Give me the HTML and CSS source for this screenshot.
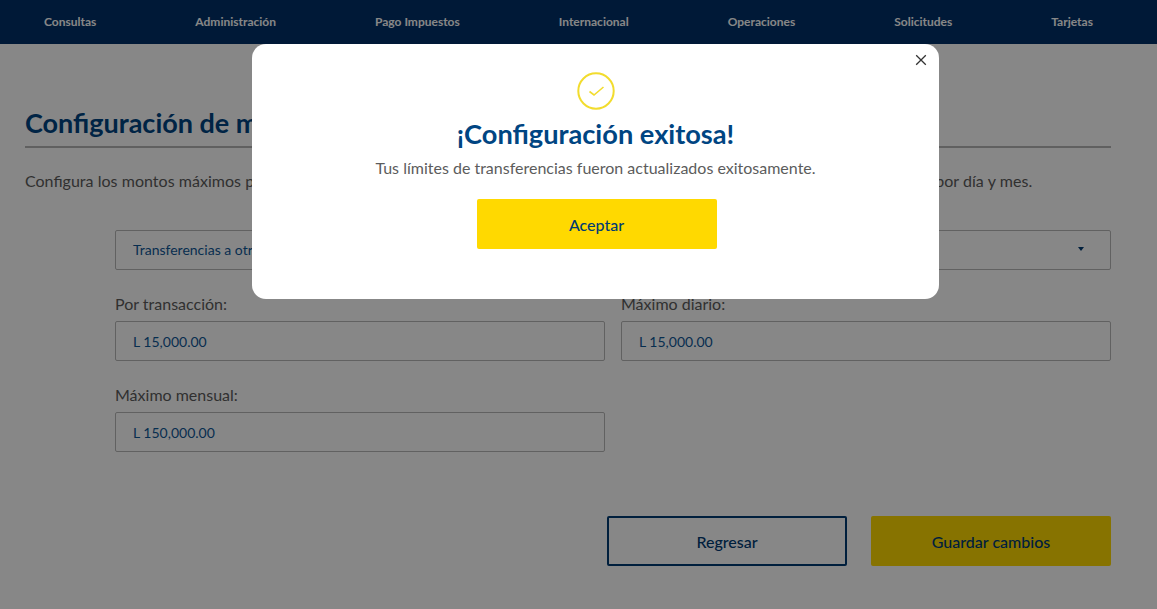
FILE: index.html
```html
<!DOCTYPE html>
<html lang="es">
<head>
    <meta charset="UTF-8">
    <meta name="viewport" content="width=device-width, initial-scale=1.0">
    <title>Configuración de montos</title>
    <link rel="stylesheet" href="styles.css">
</head>
<body>
    <nav class="topnav">
        <a href="#">Consultas</a>
        <a href="#">Administración</a>
        <a href="#">Pago Impuestos</a>
        <a href="#">Internacional</a>
        <a href="#">Operaciones</a>
        <a href="#">Solicitudes</a>
        <a href="#">Tarjetas</a>
    </nav>

    <main class="content">
        <h1 class="page-title">Configuración de montos máximos</h1>
        <p class="intro">Configura los montos máximos permitidos para todas tus transferencias según el tipo de transacción y el límite de cada operación por día y mes.</p>

        <div class="form">
            <div class="select-box">
                <span>Transferencias a otros bancos</span>
                <span class="caret"></span>
            </div>
            <div class="form-grid">
                <div class="field">
                    <label>Por transacción:</label>
                    <div class="input-box">L 15,000.00</div>
                </div>
                <div class="field">
                    <label>Máximo diario:</label>
                    <div class="input-box">L 15,000.00</div>
                </div>
                <div class="field">
                    <label>Máximo mensual:</label>
                    <div class="input-box">L 150,000.00</div>
                </div>
            </div>
        </div>

        <div class="actions">
            <button class="btn btn-outline">Regresar</button>
            <button class="btn btn-yellow">Guardar cambios</button>
        </div>
    </main>

    <div class="overlay">
        <div class="modal">
            <button class="close" aria-label="Cerrar">
                <svg width="12" height="12" viewBox="0 0 12 12"><path d="M1.2 1.2 10.8 10.8M10.8 1.2 1.2 10.8" stroke="#333" stroke-width="1.3" fill="none"/></svg>
            </button>
            <svg class="check" width="38" height="38" viewBox="0 0 38 38">
                <circle cx="19" cy="19" r="17.7" stroke="#f2dc2e" stroke-width="2" fill="none"/>
                <path d="M12.5 19.5 17 23 26.5 15" stroke="#f2dc2e" stroke-width="1.6" fill="none"/>
            </svg>
            <h2 class="modal-title">¡Configuración exitosa!</h2>
            <p class="modal-text">Tus límites de transferencias fueron actualizados exitosamente.</p>
            <button class="btn btn-yellow">Aceptar</button>
        </div>
    </div>
</body>
</html>
```

FILE: styles.css
```css
html, body {
    height: 100%;
}
body {
    margin: 0;
    font-family: 'Lato', sans-serif;
    background-color: #fff;
    overflow: hidden;
}
.topnav {
    height: 44px;
    box-sizing: border-box;
    background: #003069;
    display: flex;
    justify-content: space-between;
    align-items: center;
    padding: 0 64px 2px 44px;
}
.topnav a {
    color: #fff;
    font-size: 12px;
    font-weight: 700;
    text-decoration: none;
}
.content {
    padding: 0 46px 0 25px;
}
.page-title {
    margin: 0;
    padding: 61px 0 5px;
    font-size: 27px;
    line-height: 36px;
    font-weight: 700;
    color: #004582;
    border-bottom: 2px solid #b5b5b5;
}
.intro {
    margin: 22px 0 0;
    font-size: 16px;
    line-height: 22px;
    color: #5c5c5c;
    white-space: nowrap;
    word-spacing: 0.2px;
}
.form {
    margin: 38px 0 0 90px;
}
.select-box {
    height: 36px;
    border: 1px solid #b8b8b8;
    border-radius: 2px;
    display: flex;
    align-items: center;
    justify-content: space-between;
    padding: 0 26px 2px 17px;
    font-size: 14px;
    color: #0f5797;
}
.caret {
    width: 0;
    height: 0;
    border-left: 3px solid transparent;
    border-right: 3px solid transparent;
    border-top: 4px solid #003b74;
}
.form-grid {
    display: grid;
    grid-template-columns: 1fr 1fr;
    column-gap: 16px;
    row-gap: 23px;
    margin-top: 23px;
}
.field label {
    display: block;
    font-size: 16px;
    line-height: 22px;
    color: #5c5c5c;
    margin-bottom: 6px;
}
.input-box {
    height: 38px;
    line-height: 40px;
    border: 1px solid #b8b8b8;
    border-radius: 2px;
    padding: 0 17px;
    font-size: 14px;
    color: #0f5797;
}
.actions {
    display: flex;
    justify-content: flex-end;
    gap: 24px;
    margin-top: 64px;
}
.btn {
    width: 240px;
    height: 50px;
    font-family: inherit;
    font-size: 16px;
    font-weight: 500;
    color: #003b74;
    border-radius: 2px;
    border: none;
    padding: 0;
}
.btn-outline {
    background: transparent;
    border: 2px solid #003b74;
}
.btn-yellow {
    background: #ffd900;
}
.overlay {
    position: fixed;
    inset: 0;
    background: rgba(0, 0, 0, 0.47);
    display: flex;
    justify-content: center;
    align-items: flex-start;
    padding: 44px 0 0 34px;
}
.modal {
    position: relative;
    width: 687px;
    height: 255px;
    box-sizing: border-box;
    background: #fff;
    border-radius: 14px;
    padding: 28px 0 0 2px;
    display: flex;
    flex-direction: column;
    align-items: center;
}
.close {
    position: absolute;
    top: 10px;
    right: 12px;
    width: 12px;
    height: 12px;
    padding: 0;
    border: none;
    background: none;
    display: block;
}
.close svg {
    display: block;
}
.check {
    display: block;
    margin-right: 1px;
}
.modal-title {
    margin: 6px 2px 0 0;
    font-size: 27.2px;
    line-height: 36px;
    font-weight: 700;
    color: #004582;
}
.modal-text {
    margin: 5px 2px 0 0;
    font-size: 16px;
    line-height: 22px;
    color: #5c5c5c;
}
.modal .btn {
    margin-top: 20px;
}
```
